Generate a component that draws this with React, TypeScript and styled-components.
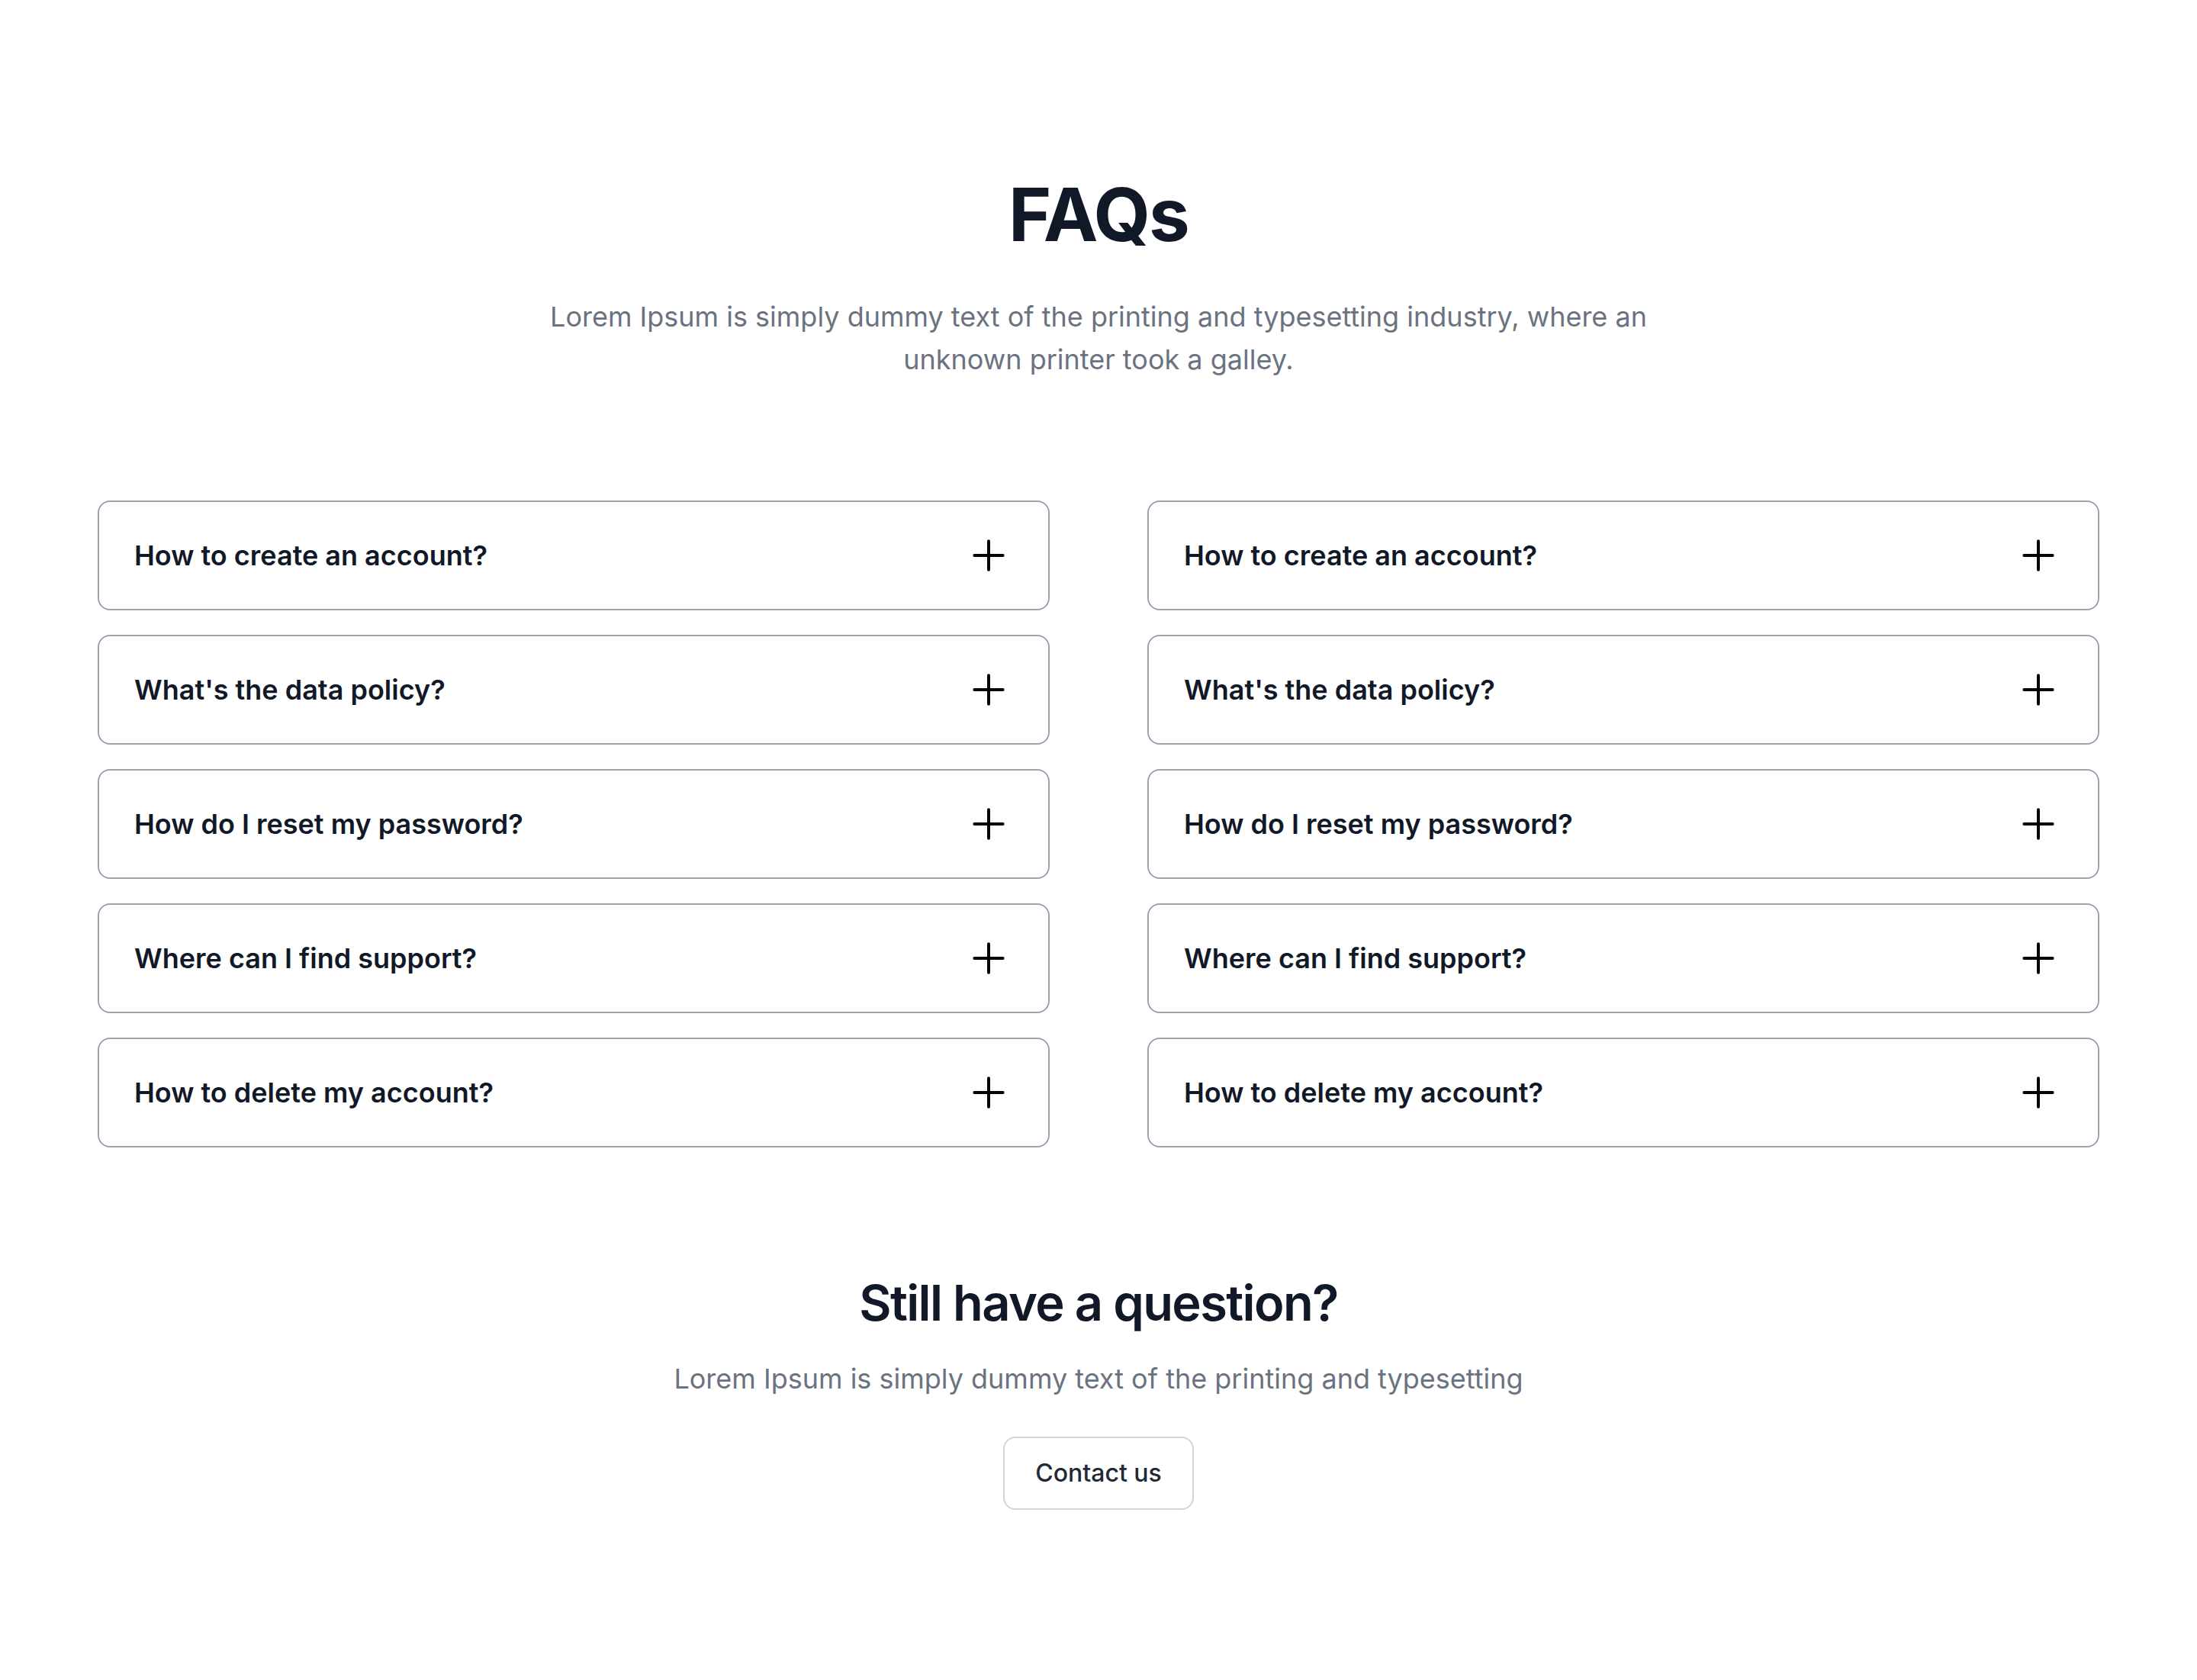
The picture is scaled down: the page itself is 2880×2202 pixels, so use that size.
import React from "react";
import styled, { createGlobalStyle } from "styled-components";
import { Plus } from "lucide-react";

const GlobalStyle = createGlobalStyle`
  html, body {
    margin: 0;
    padding: 0;
    background: #ffffff;
    font-family: Inter, "Noto Sans", "Liberation Sans", sans-serif;
    -webkit-font-smoothing: antialiased;
  }
  * { box-sizing: border-box; }
`;

const Page = styled.main`
  width: 2880px;
  min-height: 2202px;
  padding: 233px 128px 0;
  display: flex;
  flex-direction: column;
  align-items: center;
`;

const Title = styled.h1`
  margin: 0;
  font-size: 96px;
  line-height: 96px;
  font-weight: 700;
  letter-spacing: -0.02em;
  color: #111827;
`;

const Lead = styled.p`
  margin: 58px 0 0;
  max-width: 1500px;
  text-align: center;
  font-size: 36px;
  line-height: 56px;
  font-weight: 400;
  color: #6b7280;
`;

const Grid = styled.div`
  margin-top: 157px;
  width: 100%;
  display: grid;
  grid-template-columns: 1fr 1fr;
  column-gap: 128px;
`;

const Column = styled.div`
  display: flex;
  flex-direction: column;
  gap: 32px;
`;

const Item = styled.button`
  height: 144px;
  padding: 0 46px 0 46px;
  display: flex;
  align-items: center;
  justify-content: space-between;
  background: #ffffff;
  border: 2px solid #9ca3af;
  border-radius: 16px;
  font-family: inherit;
  font-size: 36px;
  line-height: 48px;
  font-weight: 600;
  color: #111827;
  text-align: left;
  cursor: pointer;
`;

const Icon = styled.span`
  display: flex;
  color: #000000;
`;

const SubTitle = styled.h2`
  margin: 164px 0 0;
  font-size: 65px;
  line-height: 80px;
  font-weight: 600;
  letter-spacing: -0.025em;
  color: #111827;
`;

const SubLead = styled.p`
  margin: 31px 0 0;
  font-size: 36px;
  line-height: 56px;
  color: #6b7280;
`;

const ContactButton = styled.button`
  margin-top: 48px;
  height: 96px;
  padding: 0 40px;
  border: 2px solid #d1d5db;
  border-radius: 16px;
  background: #ffffff;
  font-family: inherit;
  font-size: 32px;
  line-height: 48px;
  font-weight: 500;
  color: #1f2937;
  cursor: pointer;
`;

const questions = [
  "How to create an account?",
  "What's the data policy?",
  "How do I reset my password?",
  "Where can I find support?",
  "How to delete my account?",
];

function FaqColumn() {
  return (
    <Column>
      {questions.map((q) => (
        <Item key={q}>
          <span>{q}</span>
          <Icon>
            <Plus size={64} strokeWidth={1.5} />
          </Icon>
        </Item>
      ))}
    </Column>
  );
}

export default function App() {
  return (
    <>
      <GlobalStyle />
      <Page>
        <Title>FAQs</Title>
        <Lead>
          Lorem Ipsum is simply dummy text of the printing and typesetting industry, where an unknown printer took a galley.
        </Lead>
        <Grid>
          <FaqColumn />
          <FaqColumn />
        </Grid>
        <SubTitle>Still have a question?</SubTitle>
        <SubLead>Lorem Ipsum is simply dummy text of the printing and typesetting</SubLead>
        <ContactButton>Contact us</ContactButton>
      </Page>
    </>
  );
}
